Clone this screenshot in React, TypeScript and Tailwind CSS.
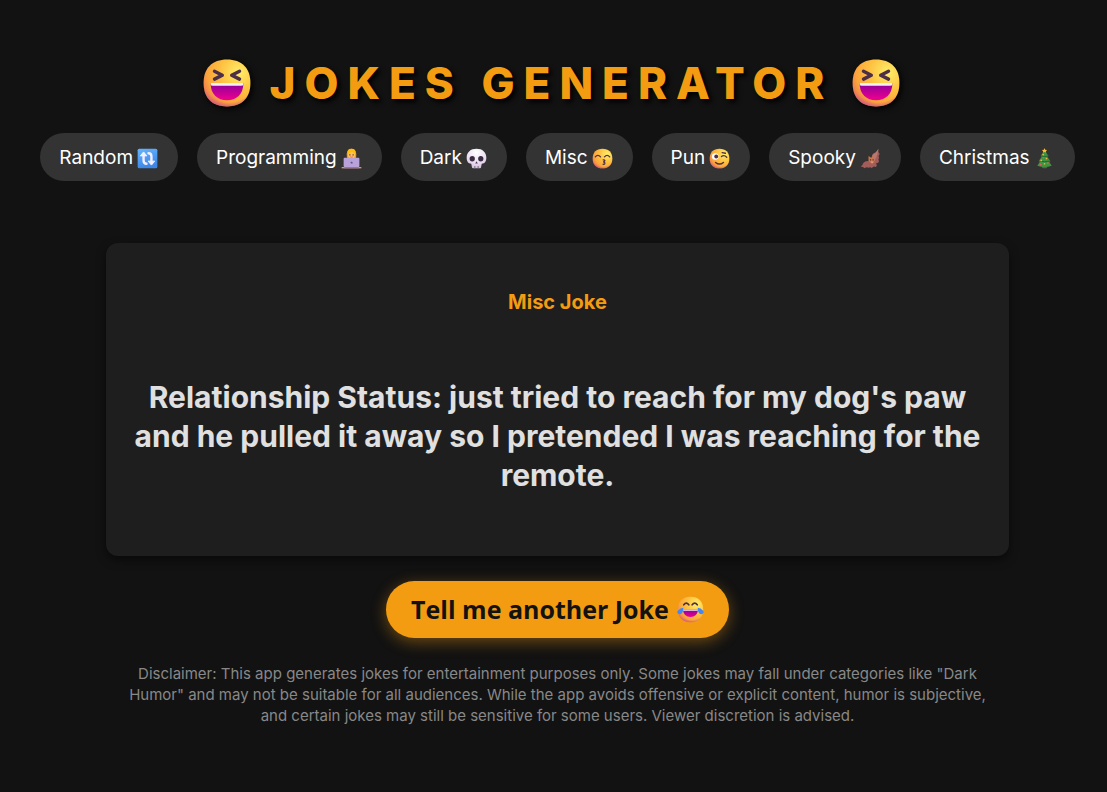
import React, { useState } from "react";

type IconProps = { className?: string };

function FaceGradients({ id }: { id: string }) {
  return (
    <defs>
      <radialGradient id={`${id}-base`} cx="0.75" cy="0.28" r="0.8">
        <stop offset="0" stopColor="#ffee68" />
        <stop offset="0.5" stopColor="#ffc141" />
        <stop offset="0.85" stopColor="#fba43b" />
        <stop offset="1" stopColor="#ef8450" />
      </radialGradient>
      <radialGradient id={`${id}-chin`} cx="0.54" cy="0.32" r="0.7">
        <stop offset="0.84" stopColor="#dd5d72" stopOpacity="0" />
        <stop offset="1" stopColor="#c7508f" stopOpacity="0.85" />
      </radialGradient>
      <linearGradient id={`${id}-mouth`} x1="0" y1="0" x2="0" y2="1">
        <stop offset="0" stopColor="#8b0099" />
        <stop offset="1" stopColor="#f00090" />
      </linearGradient>
    </defs>
  );
}

function FaceBase({ id }: { id: string }) {
  const d = "M16 1C25.500 1 31 6.500 31 16S25.500 31 16 31 1 25.500 1 16 6.500 1 16 1Z";
  return (
    <>
      <FaceGradients id={id} />
      <path d={d} fill={`url(#${id}-base)`} />
      <path d={d} fill={`url(#${id}-chin)`} />
    </>
  );
}

function LaughIcon({ id, className }: IconProps & { id: string }) {
  return (
    <svg viewBox="0 0 32 32" className={className} aria-hidden="true">
      <FaceBase id={id} />
      <path d="M8 8.500L13 11 8 13.500M24 8.500L19 11 24 13.500" fill="none" stroke="#4d3047" strokeWidth="2.200" strokeLinecap="round" strokeLinejoin="round" />
      <path d="M5.500 16H26.500C26.500 23.500 22 27 16 27S5.500 23.500 5.500 16Z" fill={`url(#${id}-mouth)`} />
      <path d="M5.500 16H26.500V16.600Q26.500 17.800 25 17.800H7Q5.500 17.800 5.500 16.600Z" fill="#f3eef8" />
    </svg>
  );
}

function RepeatIcon({ className }: IconProps) {
  return (
    <svg viewBox="0 0 32 32" className={className} aria-hidden="true">
      <defs>
        <linearGradient id="repeat-bg" x1="0" y1="0" x2="0.3" y2="1">
          <stop offset="0" stopColor="#64b5ff" />
          <stop offset="1" stopColor="#3c87e8" />
        </linearGradient>
      </defs>
      <rect x="1" y="1" width="30" height="30" rx="2.500" fill="url(#repeat-bg)" />
      <path d="M10 9V19Q10 24 14.500 24M22 23V13Q22 8 17.500 8" fill="none" stroke="#f5eeff" strokeWidth="3.600" strokeLinecap="round" />
      <path d="M10 6L5 12H15ZM22 26L17 20H27Z" fill="#f5eeff" stroke="#f5eeff" strokeWidth="1.500" strokeLinejoin="round" />
    </svg>
  );
}

function TechnologistIcon({ className }: IconProps) {
  return (
    <svg viewBox="0 0 32 32" className={className} aria-hidden="true">
      <path d="M5 27Q5 17 12 16H20Q27 17 27 27V30H5Z" fill="#d98b55" />
      <path d="M9 15Q7 1 16 1T23 15Q20 18 16 17 12 18 9 15Z" fill="#ef9a1c" />
      <ellipse cx="16" cy="10.500" rx="5.500" ry="5.500" fill="#ffc25a" />
      <path d="M10 9Q15 8 17 5 18 8 22 9 23 1 16 1 9 1 10 9Z" fill="#ffbd14" />
      <path d="M12.500 10.500H14.500M17.500 10.500H19.500" stroke="#70434a" strokeWidth="1.600" />
      <path d="M14 13.500Q16 14.500 18 13.500" stroke="#c1474d" fill="none" />
      <rect x="4" y="15" width="24" height="14" rx="1.500" fill="#b9a2da" />
      <path d="M14 22L16 20.500 18.500 23 16 24Z" fill="#6d5594" />
      <path d="M1 29H31V31H1Z" fill="#dca070" />
      <path d="M5 29H27V31H5Z" fill="#8f73b7" />
    </svg>
  );
}

function SkullIcon({ className }: IconProps) {
  return (
    <svg viewBox="0 0 32 32" className={className} aria-hidden="true">
      <defs>
        <radialGradient id="skull-bone" cx="0.5" cy="0.2" r="0.85">
          <stop offset="0" stopColor="#fff" />
          <stop offset="0.6" stopColor="#eadcf1" />
          <stop offset="1" stopColor="#cdb8d8" />
        </radialGradient>
      </defs>
      <path d="M16 1C25 1 31 6 31 15 31 20 29 24 24 24L23 29Q23 31 21 31H11Q9 31 9 29L8 24C3 24 1 20 1 15 1 6 7 1 16 1Z" fill="url(#skull-bone)" />
      <ellipse cx="9.500" cy="16.500" rx="4" ry="4.200" fill="#3b2c42" />
      <ellipse cx="22.500" cy="16.500" rx="4" ry="4.200" fill="#3b2c42" />
      <path d="M16 20L14 23.500H18Z" fill="#4a3852" />
      <path d="M13.500 27.500V31M18.500 27.500V31" stroke="#6a5672" strokeWidth="1.300" />
    </svg>
  );
}

function KissIcon({ className }: IconProps) {
  return (
    <svg viewBox="0 0 32 32" className={className} aria-hidden="true">
      <FaceBase id="kiss" />
      <path d="M5 13.500Q9 9 13 13.500M19 13.500Q23 9 27 13.500" fill="none" stroke="#4d3047" strokeWidth="2" strokeLinecap="round" />
      <path d="M17 18Q20 18 19.500 19.500 19 21 17 21 20 21.500 19.500 23.500 19 25 17 24.800" fill="none" stroke="#4d3047" strokeWidth="2" strokeLinecap="round" />
    </svg>
  );
}

function WinkIcon({ className }: IconProps) {
  return (
    <svg viewBox="0 0 32 32" className={className} aria-hidden="true">
      <FaceBase id="wink" />
      <circle cx="9.500" cy="13" r="5" fill="#fff" />
      <circle cx="11" cy="13" r="3" fill="#4d3047" />
      <path d="M19 13Q23 10 27 14M20 7L25 8" fill="none" stroke="#4d3047" strokeWidth="2" strokeLinecap="round" />
      <path d="M10 22Q16 27 22 22" fill="none" stroke="#4d3047" strokeWidth="2.200" strokeLinecap="round" />
    </svg>
  );
}

function BatIcon({ className }: IconProps) {
  return (
    <svg viewBox="0 0 32 32" className={className} aria-hidden="true">
      <path d="M28 1Q26 6 21 8 17 11 18 17L14 16 14 20Q8 19 5 23 4 27 1 28 5 28 7 31 10 28 13 30 16 28 18 31 20 27 24 29 27 27 24 23 28 24 29 20 27 18 29 15 27 12 30 9 27 6 28 1Z" fill="#a35c5a" />
      <path d="M28 2Q27 12 22 20L19 15Q18 9 23 8Z" fill="#b8786d" />
      <path d="M13 20L13 12 17 15 20 12 22 18Q23 23 18 24Z" fill="#c9744c" />
      <circle cx="16" cy="18" r="1" fill="#3c2029" />
      <circle cx="20" cy="18" r="1" fill="#3c2029" />
      <path d="M18 20L17 22H20Z" fill="#f4d3b8" />
    </svg>
  );
}

function TreeIcon({ className }: IconProps) {
  return (
    <svg viewBox="0 0 32 32" className={className} aria-hidden="true">
      <path d="M12 26H20V30Q16 32 12 30Z" fill="#87484f" />
      <path d="M16 3L22 12 20 13 25 20 23 21 27 27Q16 31 5 27L9 21 7 20 12 13 10 12Z" fill="#3f943f" />
      <path d="M11 12Q16 14 22 12M8 20Q17 22 24 20" fill="none" stroke="#256832" strokeWidth="1.500" />
      <path d="M16 0L17 2.500 20 3 18 5 18.500 7 16 6 13.500 7 14 5 12 3 15 2.500Z" fill="#ffbd35" />
      <g fill="#f5b547">
        <circle cx="14" cy="10" r="1.300" />
        <circle cx="19" cy="16" r="1.300" />
        <circle cx="11" cy="19" r="1.300" />
        <circle cx="16" cy="24" r="1.300" />
      </g>
      <g fill="#e45a67">
        <circle cx="14" cy="15" r="1.200" />
        <circle cx="21" cy="23" r="1.500" />
        <circle cx="10" cy="25" r="1.500" />
      </g>
    </svg>
  );
}

function TearsIcon({ className }: IconProps) {
  return (
    <svg viewBox="0 0 32 32" className={className} aria-hidden="true">
      <FaceBase id="tears" />
      <path d="M8 10.500Q11 6.500 14 10.500M18 10.500Q21 6.500 24 10.500" fill="none" stroke="#4d3047" strokeWidth="2" strokeLinecap="round" />
      <path d="M7 16H25Q24 25 16 25T7 16Z" fill="url(#tears-mouth)" />
      <path d="M7 16H25L24.500 17.500H7.500Z" fill="#f3eef8" />
      <path d="M7.500 14Q4 14 1 17.500 -0.500 19.500 1.500 21 4 22.500 6 20 7.500 18 7.500 14ZM24.500 14Q28 14 31 17.500 32.500 19.500 30.500 21 28 22.500 26 20 24.500 18 24.500 14Z" fill="#4387f6" />
    </svg>
  );
}

const categories = [
  { name: "Random", Icon: RepeatIcon },
  { name: "Programming", Icon: TechnologistIcon },
  { name: "Dark", Icon: SkullIcon },
  { name: "Misc", Icon: KissIcon },
  { name: "Pun", Icon: WinkIcon },
  { name: "Spooky", Icon: BatIcon },
  { name: "Christmas", Icon: TreeIcon },
];

export default function App() {
  const [category, setCategory] = useState("Misc");
  return (
    <main className="flex min-h-screen flex-col items-center bg-[#121212] pt-[58px] pr-6 pb-16 pl-8 font-['Inter',sans-serif] text-white">
      <h1 className="flex items-center gap-[18px] pr-3 text-[44px] leading-[50px] font-extrabold text-[#f39c12]">
        <LaughIcon id="laugh-left" className="size-[50px] drop-shadow-[2px_2px_3px_#000]" />
        <span className="tracking-[9px] whitespace-nowrap [text-shadow:3px_3px_5px_#000]">JOKES GENERATOR</span>
        <LaughIcon id="laugh-right" className="size-[50px] drop-shadow-[2px_2px_3px_#000]" />
      </h1>

      <nav aria-label="Joke categories" className="mt-[25px] flex flex-wrap justify-center gap-[19px]">
        {categories.map(({ name, Icon }) => (
          <button
            key={name}
            type="button"
            onClick={() => setCategory(name)}
            className="flex h-12 cursor-pointer items-center gap-1 rounded-full bg-[#333] pt-0.5 pr-5 pl-[19px] text-[19px] leading-6 whitespace-nowrap"
          >
            {name}
            <Icon className="size-[21px]" />
          </button>
        ))}
      </nav>

      <section className="mt-[62px] w-full max-w-[903px] rounded-xl bg-[#1e1e1e] px-6 pt-[43px] pb-[61px] text-center shadow-[0_4px_10px_rgba(0,0,0,0.5)]">
        <h2 className="text-[20px] leading-8 font-bold text-[#f39c12]">{category} Joke</h2>
        <p className="mt-[60px] text-[30px] leading-[39px] font-bold text-[#e0e0e0]">
          Relationship Status: just tried to reach for my dog's paw and he pulled it away so I pretended I was reaching for the remote.
        </p>
      </section>

      <button
        type="button"
        className="mt-[25px] flex h-[57px] cursor-pointer items-center gap-2 rounded-full bg-[#f39c12] px-[25px] font-['Open_Sans',sans-serif] text-[25px] font-bold whitespace-nowrap text-[#121212] shadow-[0_4px_15px_rgba(243,156,18,0.4)]"
      >
        Tell me another Joke
        <TearsIcon className="size-[27px]" />
      </button>

      <p className="mt-[25px] w-full max-w-[882px] text-center text-[15px] leading-[21px] text-[#888]">
        Disclaimer: This app generates jokes for entertainment purposes only. Some jokes may fall under categories like "Dark Humor" and may not be suitable for all audiences. While the app avoids offensive or explicit content, humor is subjective, and certain jokes may still be sensitive for some users. Viewer discretion is advised.
      </p>
    </main>
  );
}
